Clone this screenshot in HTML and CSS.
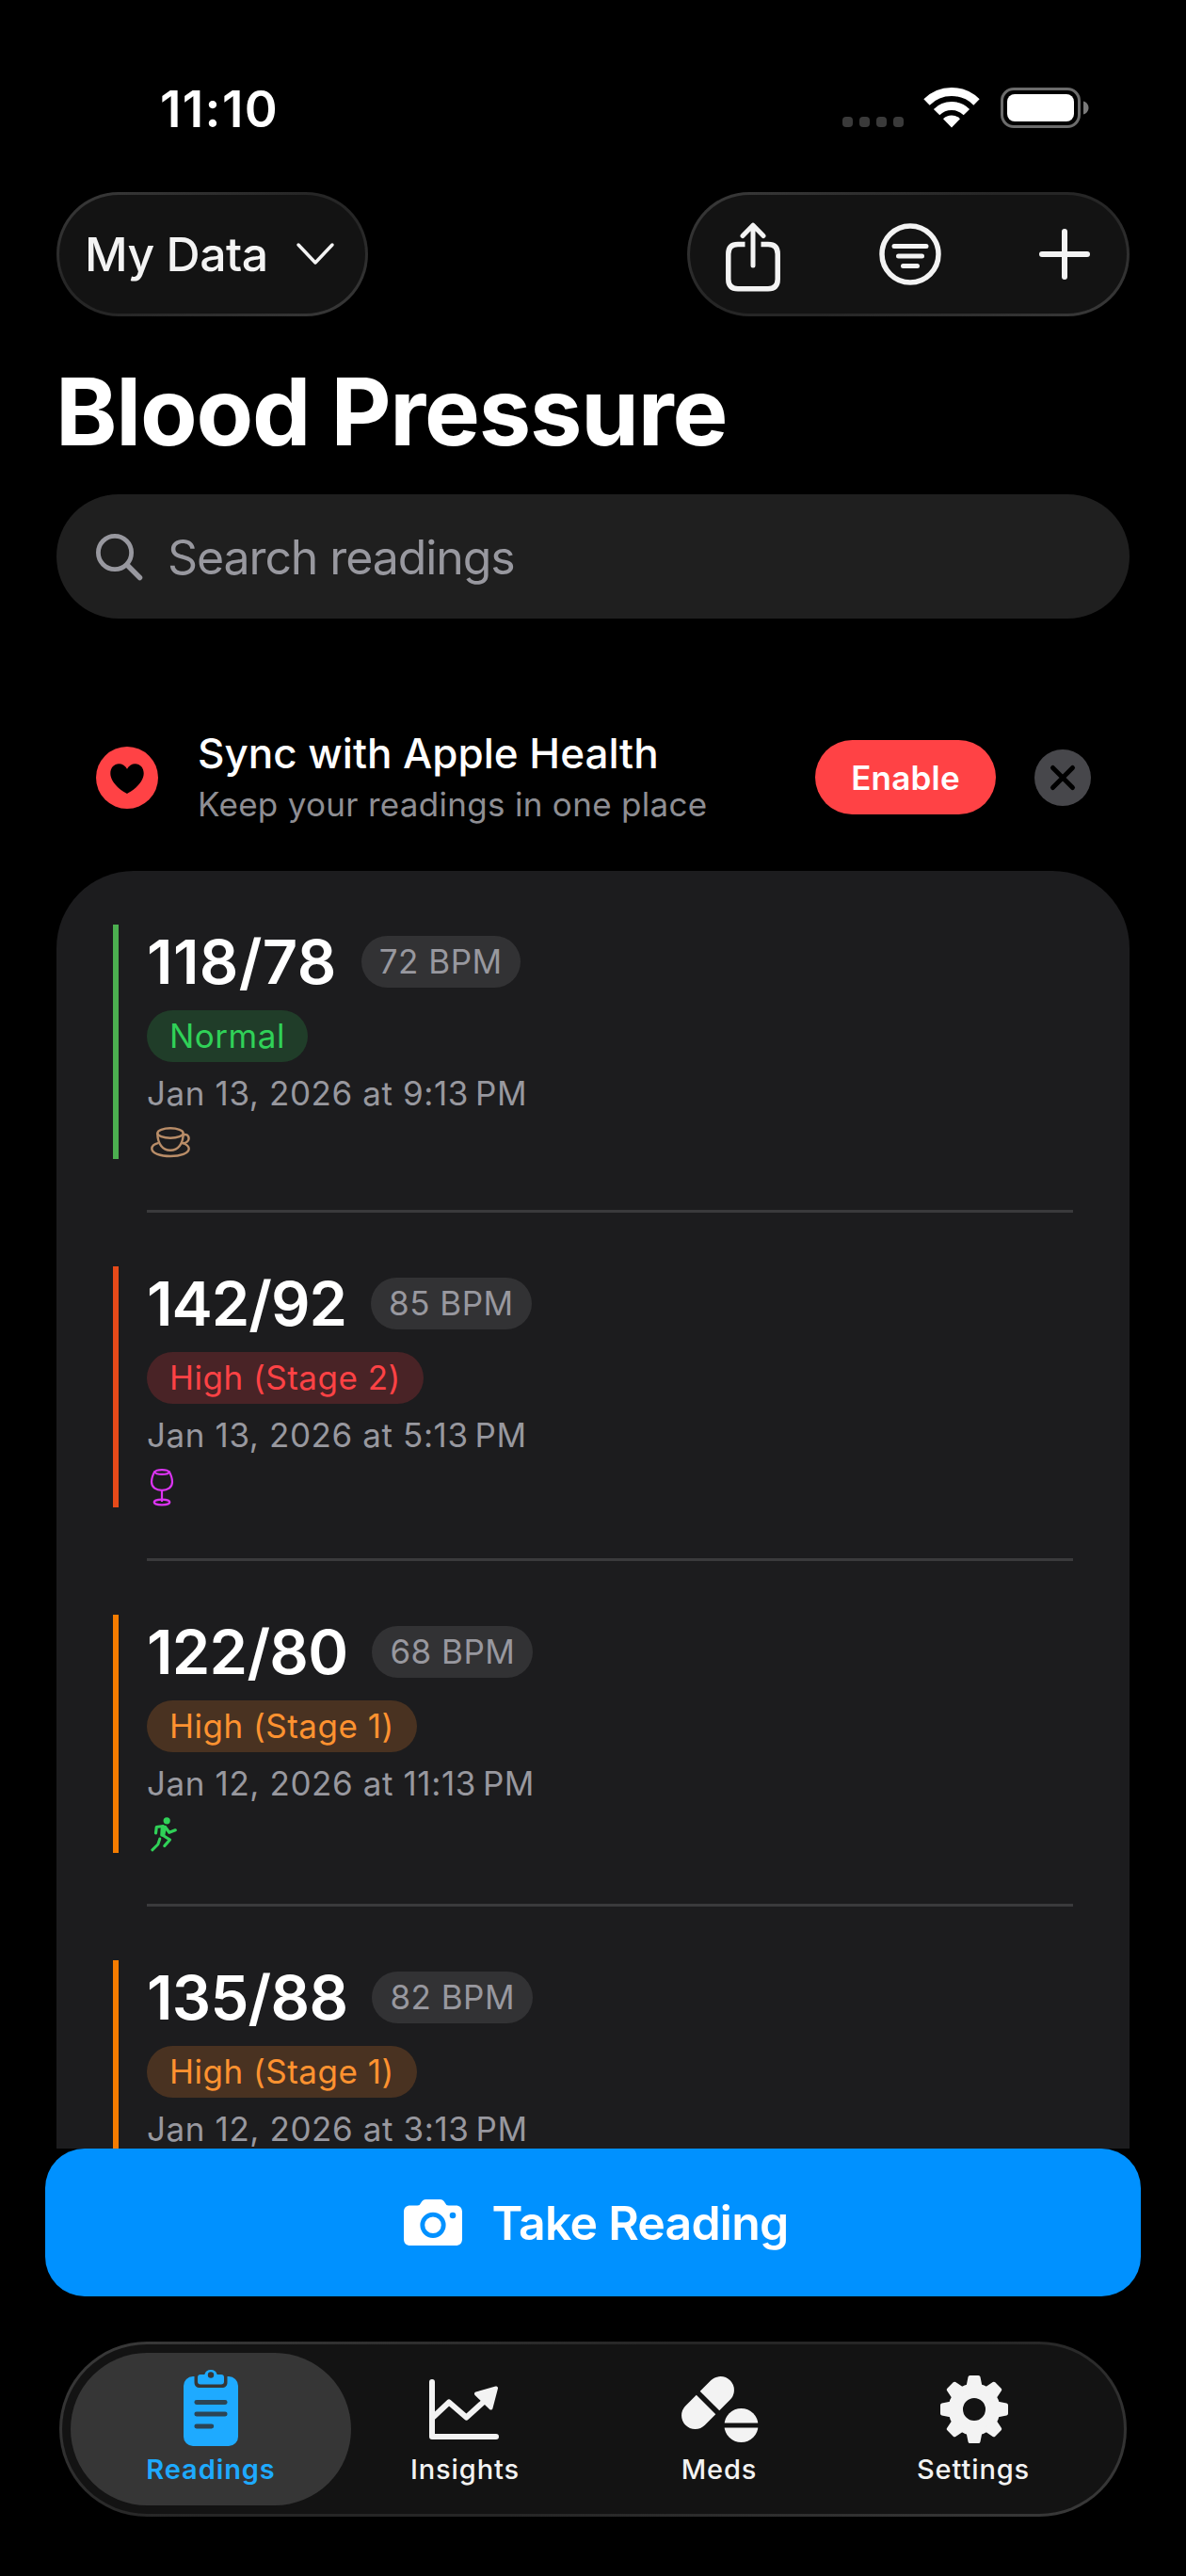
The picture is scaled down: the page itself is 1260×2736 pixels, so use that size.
FILE: index.html
```html
<!DOCTYPE html>
<html lang="en">
<head>
    <meta charset="UTF-8">
    <meta name="viewport" content="width=device-width, initial-scale=1.0">
    <title>Blood Pressure</title>
    <link rel="stylesheet" href="styles.css">
</head>
<body>

    <div class="status-bar">
        <span class="time">11:10</span>
        <div class="status-icons">
            <div class="signal"><i></i><i></i><i></i><i></i></div>
            <svg class="wifi" width="58" height="43" viewBox="0 0 58 43" fill="none" stroke="#fff" stroke-width="9">
                <path d="M2.5 15.5a37.5 37.5 0 0 1 53 0"/>
                <path d="M13.1 26.1a22.5 22.5 0 0 1 31.8 0"/>
                <path d="M29 42.5L20 33.2a13 13 0 0 1 18 0z" fill="#fff" stroke="none"/>
            </svg>
            <svg class="battery" width="94" height="43" viewBox="0 0 94 43">
                <rect x="1.5" y="1.5" width="82" height="40" rx="12.5" fill="none" stroke="#6b6b6b" stroke-width="3"/>
                <rect x="7" y="7" width="71" height="29" rx="8" fill="#fff"/>
                <path d="M88 14.5c3.5 1 5.5 4 5.5 7s-2 6-5.5 7z" fill="#7a7a7a"/>
            </svg>
        </div>
    </div>

    <div class="toolbar">
        <button class="glass profile-button">
            <span>My Data</span>
            <svg width="40" height="24" viewBox="0 0 40 24" fill="none" stroke="#f3f3f3" stroke-width="3.5" stroke-linecap="round" stroke-linejoin="round"><path d="M2 2l18 19L38 2"/></svg>
        </button>
        <div class="glass actions">
            <svg width="58" height="74" viewBox="0 -3 58 74" fill="none" stroke="#f3f3f3" stroke-width="5.5">
                <path d="M20.5 23.5H13q-10.2 0-10.2 10.2V60.5q0 10.2 10.2 10.2h32q10.2 0 10.2-10.2V33.7q0-10.2-10.2-10.2h-7.5"/>
                <path d="M29 46V4M18 14.5L29 3.2l11 11.3" stroke-width="5" stroke-linecap="round" stroke-linejoin="round"/>
            </svg>
            <svg width="66" height="66" viewBox="0 0 66 66" fill="none" stroke="#f3f3f3" stroke-width="5" stroke-linecap="round">
                <circle cx="33" cy="33" r="30" stroke-width="5.5"/>
                <path d="M16 24.5h34M20.5 35h25M25.5 45.5h15"/>
            </svg>
            <svg width="54" height="54" viewBox="0 0 54 54" stroke="#f3f3f3" stroke-width="6" stroke-linecap="round"><path d="M27 3v48M3 27h48"/></svg>
        </div>
    </div>

    <h1>Blood Pressure</h1>

    <div class="search">
        <svg width="50" height="50" viewBox="0 0 50 50" fill="none" stroke="#98989f" stroke-width="4.8" stroke-linecap="round">
            <circle cx="20" cy="20" r="17.6"/>
            <path d="M33 33l13.5 13.5" stroke-width="5.5"/>
        </svg>
        <span>Search readings</span>
    </div>

    <div class="banner">
        <svg width="66" height="66" viewBox="0 0 66 66">
            <circle cx="33" cy="33" r="33" fill="#ff4245"/>
            <path d="M33 50C27 47 15.3 38.5 15.3 28.3c0-5.8 4-10 9-10 3.7 0 7 2 8.7 5.5 1.7-3.5 5-5.5 8.7-5.5 5 0 9 4.2 9 10C50.7 38.5 39 47 33 50z"/>
        </svg>
        <div class="banner-text">
            <div class="banner-title">Sync with Apple Health</div>
            <div class="banner-sub">Keep your readings in one place</div>
        </div>
        <button class="enable">Enable</button>
        <svg width="60" height="60" viewBox="0 0 60 60">
            <circle cx="30" cy="30" r="30" fill="#47474b"/>
            <path d="M19.5 19.5l21 21M40.5 19.5l-21 21" stroke="#000" stroke-width="5" stroke-linecap="round"/>
        </svg>
    </div>

    <div class="readings">
        <div class="reading normal">
            <div class="bar"></div>
            <div class="details">
                <div class="top"><span class="value">118/78</span><span class="bpm">72 BPM</span></div>
                <span class="tag">Normal</span>
                <div class="date">Jan 13, 2026 at 9:13&#8239;PM</div>
                <svg class="factor" width="43" height="33" viewBox="0 0 43 33" fill="none" stroke="#b98d68" stroke-width="2.4">
                    <ellipse cx="21" cy="6.5" rx="13.7" ry="5.2"/>
                    <path d="M7.3 6.5C7.3 18 13 24.8 21 24.8S34.7 18 34.7 6.5"/>
                    <path d="M8.5 16.8C3.5 18 1.3 20.5 1.3 23c0 4.8 9 8 19.7 8s19.7-3.2 19.7-8c0-2.5-2-4.5-7-6.2"/>
                    <path d="M34.5 8.5c6-2 7.5 4 4.5 7-1.5 1.5-3.5 1.8-6 1.5"/>
                </svg>
            </div>
        </div>
        <div class="reading stage2">
            <div class="bar"></div>
            <div class="details">
                <div class="top"><span class="value">142/92</span><span class="bpm">85 BPM</span></div>
                <span class="tag">High (Stage 2)</span>
                <div class="date">Jan 13, 2026 at 5:13&#8239;PM</div>
                <svg class="factor" width="25" height="40" viewBox="0 0 25 40" fill="none" stroke="#db34f2" stroke-width="2.2">
                    <path d="M4.5 2.5C2 7 1 11 1 14c0 5.8 5 8.8 11 8.8s11-3 11-8.8c0-3-1-7-3.5-11.5"/>
                    <ellipse cx="12" cy="3.5" rx="7.5" ry="2.4"/>
                    <path d="M12 23v12"/>
                    <ellipse cx="12" cy="35.5" rx="8.2" ry="2.9" stroke-width="2.4"/>
                </svg>
            </div>
        </div>
        <div class="reading stage1">
            <div class="bar"></div>
            <div class="details">
                <div class="top"><span class="value">122/80</span><span class="bpm">68 BPM</span></div>
                <span class="tag">High (Stage 1)</span>
                <div class="date">Jan 12, 2026 at 11:13&#8239;PM</div>
                <svg class="factor" width="28" height="37" viewBox="0 0 28 37" fill="none" stroke="#30d158" stroke-width="3.2" stroke-linecap="round" stroke-linejoin="round">
                    <circle cx="17.2" cy="3.8" r="3.6" fill="#30d158" stroke="none"/>
                    <path d="M5.5 17l.8-6.5 7-1"/>
                    <path d="M12.3 10.500h3l-1.5 8.500h-2z" fill="#30d158"/>
                    <path d="M15.500 10.500l4.300 5.800 6.500-2.500"/>
                    <path d="M12.500 19l8 5-5.700 6.500"/>
                    <path d="M9.800 23l-2 6-6 5.800" stroke-width="3"/>
                </svg>
            </div>
        </div>
        <div class="reading stage1">
            <div class="bar"></div>
            <div class="details">
                <div class="top"><span class="value">135/88</span><span class="bpm">82 BPM</span></div>
                <span class="tag">High (Stage 1)</span>
                <div class="date">Jan 12, 2026 at 3:13&#8239;PM</div>
            </div>
        </div>
    </div>

    <button class="take-reading">
        <svg width="62" height="50" viewBox="0 0 62 50">
            <path d="M7 6.5h7.5c2 0 2.5-.8 3.5-2.5C19.5 1.2 21 0 23.5 0h15c2.5 0 4 1.2 5.5 4 1 1.700 1.500 2.500 3.500 2.500H55c4.500 0 7 2.500 7 7V42c0 4.500-2.500 7-7 7H7c-4.500 0-7-2.500-7-7V13.500c0-4.500 2.500-7 7-7z" fill="#fff"/>
            <circle cx="31" cy="27.3" r="11.2" fill="none" stroke="#0091ff" stroke-width="4.8"/>
            <circle cx="52" cy="17" r="3.3" fill="#0091ff"/>
        </svg>
        <span>Take Reading</span>
    </button>

    <div class="glass tab-bar">
        <div class="tab active">
            <svg width="58" height="84" viewBox="0 0 58 84">
                <rect x="0" y="9" width="58" height="74" rx="10" fill="#1eaaff"/>
                <path d="M11.5 5h35v10c0 4-2 6-6 6h-23c-4 0-6-2-6-6z" fill="#363636"/>
                <path d="M18 7h4.300a7 7 0 0 1 13.400 0H40q3 0 3 3v4.500q0 3-3 3H18q-3 0-3-3V10q0-3 3-3z" fill="#1eaaff"/>
                <circle cx="29" cy="7.5" r="3.2" fill="#363636"/>
                <path d="M13.8 36.5h30.4M13.8 49h30.4M13.8 62h16" stroke="#2c4454" stroke-width="4.8" stroke-linecap="round"/>
            </svg>
            <span>Readings</span>
        </div>
        <div class="tab">
            <svg width="76" height="84" viewBox="0 -12 76 84" fill="none" stroke="#f3f3f3" stroke-width="6" stroke-linecap="round" stroke-linejoin="round">
                <path d="M3 3v58h68M4.5 40L21 24.5l18.5 16L60 22"/>
                <path d="M71 9.5L50 15.5l15.5 15z" fill="#f3f3f3" stroke-width="4"/>
            </svg>
            <span>Insights</span>
        </div>
        <div class="tab">
            <svg width="82" height="84" viewBox="-1 -9 82 84" fill="#f3f3f3">
                <rect x="-5.5" y="13.5" width="67" height="29" rx="14.5" transform="rotate(-45 28 28)"/>
                <path d="M16 16l24 24" stroke="#131313" stroke-width="5.5"/>
                <circle cx="63.5" cy="52" r="18"/>
                <path d="M44 52h39" stroke="#131313" stroke-width="5"/>
            </svg>
            <span>Meds</span>
        </div>
        <div class="tab">
            <svg width="74" height="84" viewBox="-38 -44 74 84" fill="#f3f3f3">
                <circle r="21" fill="none" stroke="#f3f3f3" stroke-width="13"/>
                <g stroke="#f3f3f3" stroke-width="4" stroke-linejoin="round">
                    <path d="M-6.500-24l2-10h9l2 10z"/>
                    <path d="M-6.500-24l2-10h9l2 10z" transform="rotate(45)"/>
                    <path d="M-6.500-24l2-10h9l2 10z" transform="rotate(90)"/>
                    <path d="M-6.500-24l2-10h9l2 10z" transform="rotate(135)"/>
                    <path d="M-6.500-24l2-10h9l2 10z" transform="rotate(180)"/>
                    <path d="M-6.500-24l2-10h9l2 10z" transform="rotate(225)"/>
                    <path d="M-6.500-24l2-10h9l2 10z" transform="rotate(270)"/>
                    <path d="M-6.500-24l2-10h9l2 10z" transform="rotate(315)"/>
                </g>
                <circle r="14" fill="none" stroke="#f3f3f3" stroke-width="4"/>
            </svg>
            <span>Settings</span>
        </div>
    </div>

</body>
</html>
```
FILE: styles.css
```css
* {
    box-sizing: border-box;
}

body {
    margin: 0;
    width: 1260px;
    height: 2736px;
    overflow: hidden;
    background: #000;
    color: #fff;
    font-family: Inter, "Liberation Sans", sans-serif;
    display: flex;
    flex-direction: column;
}

svg {
    display: block;
    flex: none;
    overflow: visible;
}

button {
    border: none;
    padding: 0;
    color: inherit;
    font-family: inherit;
}

span,
.date,
.banner-title,
.banner-sub {
    white-space: nowrap;
}

.status-bar {
    height: 204px;
    flex: none;
    padding: 93px 103px 0 170px;
    display: flex;
    justify-content: space-between;
    align-items: flex-start;
}

.time {
    font-size: 53px;
    line-height: 47px;
    font-weight: 600;
    letter-spacing: 1.4px;
}

.status-icons {
    display: flex;
    align-items: flex-end;
}

.signal {
    display: flex;
    gap: 7px;
    margin: 0 22px 1px 0;
}

.signal i {
    width: 11px;
    height: 11px;
    border-radius: 4px;
    background: #3a3a3a;
}

.wifi {
    margin-right: 23px;
}

.glass {
    border: 3px solid transparent;
    background: linear-gradient(#131313, #131313) padding-box,
        linear-gradient(160deg, #3a3a3a, #262626 40%, #262626 60%, #3a3a3a) border-box;
}

.toolbar {
    display: flex;
    justify-content: space-between;
    padding: 0 60px;
    flex: none;
}

.profile-button {
    width: 331px;
    height: 132px;
    border-radius: 66px;
    padding: 0 33px 0 27px;
    display: flex;
    align-items: center;
    justify-content: space-between;
    font-size: 50px;
    font-weight: 500;
    letter-spacing: -0.5px;
    color: #f3f3f3;
}

.actions {
    width: 470px;
    height: 132px;
    border-radius: 66px;
    padding: 0 39px 0 38px;
    display: flex;
    align-items: center;
    justify-content: space-between;
}

h1 {
    margin: 0;
    padding: 41px 0 0 59px;
    height: 189px;
    flex: none;
    font-size: 99px;
    line-height: 121px;
    font-weight: 700;
    letter-spacing: -1.2px;
    white-space: nowrap;
}

.search {
    height: 132px;
    flex: none;
    margin: 0 60px;
    padding: 1px 0 0 42px;
    border-radius: 66px;
    background: #1f1f1f;
    color: #98989f;
    display: flex;
    align-items: center;
    gap: 26px;
    font-size: 50px;
    letter-spacing: -1.1px;
}

.banner {
    height: 268px;
    flex: none;
    padding: 69px 101px 0 102px;
    display: flex;
    align-items: center;
}

.banner-text {
    margin-left: 42px;
    padding-top: 3px;
    flex: 1;
}

.banner-title {
    font-size: 44px;
    line-height: 54px;
    font-weight: 500;
}

.banner-sub {
    font-size: 35px;
    line-height: 54px;
    letter-spacing: 0.3px;
    color: #8e8e93;
}

.enable {
    width: 192px;
    height: 79px;
    border-radius: 40px;
    background: #ff4245;
    font-size: 35px;
    font-weight: 600;
    letter-spacing: 0.2px;
    margin-right: 41px;
}

.readings {
    height: 1357px;
    flex: none;
    margin: 0 60px;
    overflow: hidden;
    background: #1c1c1e;
    border-radius: 82px 82px 0 0;
}

.reading {
    display: flex;
    padding: 57px 60px 0;
}

.bar {
    width: 6px;
    margin-bottom: 57px;
}

.normal .bar {
    background: #4caf50;
}

.stage2 .bar {
    background: #e64a19;
}

.stage1 .bar {
    background: #f57c00;
}

.details {
    flex: 1;
    margin-left: 30px;
    padding-bottom: 55px;
    border-bottom: 3px solid #3a3a3c;
    display: flex;
    flex-direction: column;
    align-items: flex-start;
}

.top {
    height: 79px;
    display: flex;
    align-items: center;
    gap: 26px;
}

.value {
    font-size: 65px;
    font-weight: 600;
    line-height: 79px;
}

.normal .value {
    letter-spacing: 0.4px;
}

.stage2 .value {
    letter-spacing: -1px;
}

.stage1 .value {
    letter-spacing: -0.7px;
}

.bpm,
.tag {
    height: 55px;
    border-radius: 28px;
    line-height: 55px;
    font-size: 35px;
    letter-spacing: 0.5px;
}

.bpm {
    padding: 0 19px;
    background: #323234;
    color: #98989f;
}

.tag {
    margin-top: 12px;
    padding: 0 24px;
}

.normal .tag {
    background: #203d29;
    color: #30d158;
}

.stage2 .tag {
    background: #492326;
    color: #ff4245;
}

.stage1 .tag {
    background: #493221;
    color: #ff9230;
}

.date {
    margin-top: 11px;
    height: 58px;
    line-height: 44px;
    font-size: 35px;
    letter-spacing: 0.6px;
    color: #98989f;
}

.factor {
    margin-left: 4px;
}

.take-reading {
    width: 1164px;
    height: 157px;
    flex: none;
    margin: 0 48px;
    padding-left: 6px;
    border-radius: 42px;
    background: #0091ff;
    display: flex;
    align-items: center;
    justify-content: center;
    gap: 32px;
    font-size: 50px;
    font-weight: 600;
    letter-spacing: -0.8px;
}

.tab-bar {
    width: 1134px;
    height: 186px;
    flex: none;
    margin: 48px 63px 0;
    padding: 9px;
    border-radius: 93px;
    display: flex;
}

.tab {
    width: 298px;
    height: 162px;
    flex: none;
    padding-top: 16px;
    border-radius: 81px;
    display: flex;
    flex-direction: column;
    align-items: center;
    gap: 6px;
    font-size: 29px;
    line-height: 36px;
    font-weight: 500;
    letter-spacing: 0.9px;
    color: #f3f3f3;
}

.tab + .tab {
    margin-left: -28px;
}

.tab.active {
    background: #363636;
    color: #1eaaff;
    font-weight: 600;
}
```
